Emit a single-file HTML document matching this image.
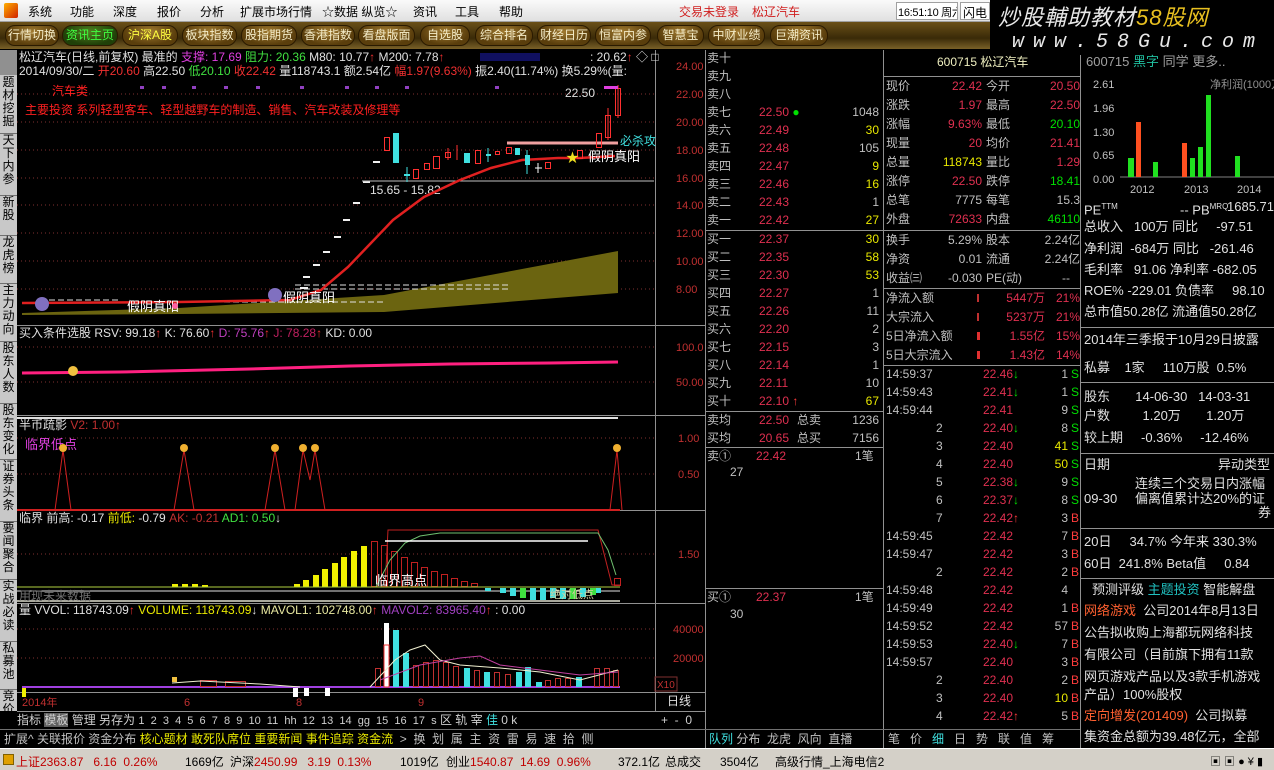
<!DOCTYPE html>
<html><head><meta charset="utf-8">
<style>
*{margin:0;padding:0;box-sizing:border-box}
body{width:1274px;height:770px;background:#000;position:relative;overflow:hidden;font-family:"Liberation Sans","Noto Sans CJK SC",sans-serif;font-size:12px;color:#c0c0c0}
.t{position:absolute;white-space:nowrap;line-height:14px}
.menu{position:absolute;left:0;top:0;width:990px;height:22px;background:linear-gradient(#fafafa,#e0e0e0);border-bottom:1px solid #a0a0a0}
.menu>span{position:absolute;top:3px;font-size:12px;color:#000;white-space:nowrap}
.tb{position:absolute;left:0;top:22px;width:990px;height:27px;background:linear-gradient(#6a5018,#3a2a08 60%,#7a6028)}
.b{position:absolute;top:3px;height:21px;border-radius:10px;background:radial-gradient(ellipse at 50% 30%,#a07a30,#5a3e0c 70%);border:1px solid #2a1a00;color:#f4ecc8;font-size:12px;text-align:center;line-height:19px}
.wm{position:absolute;left:990px;top:0;width:284px;height:55px;background:#000;font-style:italic;color:#e8e8e8}
.side{position:absolute;left:0;top:50px;width:17px;height:661px;background:#c8c8c8}
.side div{position:absolute;left:0;width:17px;font-size:12px;line-height:13px;color:#000;text-align:center;border-bottom:1px solid #707070}
.r{color:#ff3c3c}.g{color:#00e000}.y{color:#e8e800}.w{color:#e0e0e0}.c{color:#40e0e0}.m{color:#e040e0}.dr{color:#e03050}
.ob{font-size:12px}
.f{font-size:13px;color:#e0e0e0}
.bar2{position:absolute;top:730px;height:18px;font-size:12px;color:#c0c0c0;white-space:nowrap}
.status{position:absolute;left:0;top:748px;width:1274px;height:22px;background:#d4d0c8;border-top:1px solid #fff;color:#000}
.status>span{position:absolute;top:4px;font-size:12px;white-space:nowrap}
</style></head><body>

<div class="menu">
<div style="position:absolute;left:4px;top:3px;width:14px;height:15px;background:linear-gradient(135deg,#ffb000,#d02000);border-radius:2px"></div>
<span style="left:28px">系统</span><span style="left:70px">功能</span><span style="left:113px">深度</span><span style="left:157px">报价</span><span style="left:200px">分析</span><span style="left:240px">扩展市场行情</span><span style="left:322px">☆数据 纵览☆</span><span style="left:413px">资讯</span><span style="left:455px">工具</span><span style="left:499px">帮助</span>
<span style="left:679px;color:#d02020">交易未登录</span><span style="left:752px;color:#d02020">松辽汽车</span>
<span style="left:896px;top:2px;height:18px;width:62px;border:1px solid #a0a0a0;background:#fff;padding:1px 1px;font-size:11px;letter-spacing:-0.3px;overflow:hidden">16:51:10 周六</span>
<span style="left:960px;top:2px;height:18px;width:30px;border:1px solid #a0a0a0;background:#fff;padding:1px 2px">闪电</span>
</div>

<div class="tb">
<div class="b" style="left:5px;width:54px">行情切换</div>
<div class="b" style="left:62px;width:56px;color:#40ff40;background:radial-gradient(ellipse at 50% 30%,#508020,#204008 70%)">资讯主页</div>
<div class="b" style="left:122px;width:56px;color:#ffff40">沪深A股</div>
<div class="b" style="left:182px;width:55px">板块指数</div>
<div class="b" style="left:241px;width:56px">股指期货</div>
<div class="b" style="left:301px;width:54px">香港指数</div>
<div class="b" style="left:358px;width:57px">看盘版面</div>
<div class="b" style="left:420px;width:50px">自选股</div>
<div class="b" style="left:475px;width:58px">综合排名</div>
<div class="b" style="left:537px;width:54px">财经日历</div>
<div class="b" style="left:595px;width:56px">恒富内参</div>
<div class="b" style="left:657px;width:47px">智慧宝</div>
<div class="b" style="left:708px;width:57px">中财业绩</div>
<div class="b" style="left:770px;width:58px">巨潮资讯</div>
</div>

<div class="wm">
<div class="t" style="left:8px;top:6px;font-size:22px;line-height:24px;letter-spacing:1px">炒股輔助教材<span style="color:#e8c020">58股网</span></div>
<div class="t" style="left:22px;top:32px;font-size:20px;line-height:22px;letter-spacing:9px;font-family:'Liberation Mono',monospace">www.58Gu.com</div>
</div>

<div class="side">
<div style="top:26px;height:58px">题<br>材<br>挖<br>掘</div>
<div style="top:84px;height:62px">天<br>下<br>内<br>参</div>
<div style="top:146px;height:40px">新<br>股</div>
<div style="top:186px;height:48px">龙<br>虎<br>榜</div>
<div style="top:234px;height:58px">主<br>力<br>动<br>向</div>
<div style="top:292px;height:62px">股<br>东<br>人<br>数</div>
<div style="top:354px;height:56px">股<br>东<br>变<br>化</div>
<div style="top:410px;height:62px">证<br>券<br>头<br>条</div>
<div style="top:472px;height:58px">要<br>闻<br>聚<br>合</div>
<div style="top:530px;height:62px">实<br>战<br>必<br>读</div>
<div style="top:592px;height:48px">私<br>募<br>池</div>
<div style="top:640px;height:40px;border:none">竞<br>价</div>
</div>
<div style="position:absolute;left:0;top:50px;width:17px;height:25px;background:#909090"></div>

<svg width="1274" height="770" style="position:absolute;left:0;top:0" font-family="Liberation Sans,Noto Sans CJK SC,sans-serif" font-size="12">
<g stroke="#909090" stroke-width="1" fill="none">
<line x1="655.5" y1="50" x2="655.5" y2="711"/>
<line x1="705.5" y1="50" x2="705.5" y2="748"/>
<line x1="883.5" y1="50" x2="883.5" y2="748"/>
<line x1="1080.5" y1="55" x2="1080.5" y2="748"/>
<line x1="17" y1="325.5" x2="705" y2="325.5"/>
<line x1="17" y1="415.5" x2="705" y2="415.5"/>
<line x1="17" y1="510.5" x2="705" y2="510.5"/>
<line x1="17" y1="603.5" x2="705" y2="603.5"/>
<line x1="17" y1="692.5" x2="705" y2="692.5"/>
<line x1="17" y1="711.5" x2="705" y2="711.5"/>
<line x1="705" y1="230.5" x2="883" y2="230.5"/>
<line x1="705" y1="411.5" x2="883" y2="411.5"/>
<line x1="705" y1="447.5" x2="883" y2="447.5"/>
<line x1="705" y1="588.5" x2="883" y2="588.5"/>
<line x1="883" y1="76.5" x2="1080" y2="76.5"/>
<line x1="883" y1="230.5" x2="1080" y2="230.5"/>
<line x1="883" y1="288.5" x2="1080" y2="288.5"/>
<line x1="883" y1="365.5" x2="1080" y2="365.5"/>
<line x1="1080" y1="327.5" x2="1274" y2="327.5"/>
<line x1="1080" y1="382.5" x2="1274" y2="382.5"/>
<line x1="1080" y1="453.5" x2="1274" y2="453.5"/>
<line x1="1080" y1="528.5" x2="1274" y2="528.5"/>
<line x1="1080" y1="578.5" x2="1274" y2="578.5"/>
</g>
<g stroke="#803030" stroke-dasharray="1,3">
<line x1="17" y1="94" x2="655" y2="94"/><line x1="17" y1="122" x2="655" y2="122"/><line x1="17" y1="150" x2="655" y2="150"/><line x1="17" y1="178" x2="655" y2="178"/><line x1="17" y1="205" x2="655" y2="205"/><line x1="17" y1="233" x2="655" y2="233"/><line x1="17" y1="261" x2="655" y2="261"/><line x1="17" y1="289" x2="655" y2="289"/>
<line x1="17" y1="347" x2="655" y2="347"/><line x1="17" y1="382" x2="655" y2="382"/>
<line x1="17" y1="438" x2="655" y2="438"/><line x1="17" y1="474" x2="655" y2="474"/>
<line x1="17" y1="554" x2="655" y2="554"/>
<line x1="17" y1="629" x2="655" y2="629"/><line x1="17" y1="658" x2="655" y2="658"/>
</g>
<g fill="#c03030" font-size="11">
<text x="676" y="70">24.00</text><text x="676" y="98">22.00</text><text x="676" y="126">20.00</text><text x="676" y="154">18.00</text><text x="676" y="182">16.00</text><text x="676" y="209">14.00</text><text x="676" y="237">12.00</text><text x="676" y="265">10.00</text><text x="676" y="293">8.00</text>
<text x="676" y="351">100.0</text><text x="676" y="386">50.00</text>
<text x="678" y="442">1.00</text><text x="678" y="478">0.50</text>
<text x="678" y="558">1.50</text>
<text x="673" y="633">40000</text><text x="673" y="662">20000</text>
<text x="22" y="706">2014年</text><text x="184" y="706">6</text><text x="296" y="706">8</text><text x="418" y="706">9</text>
</g>
<text x="667" y="705" fill="#e0e0e0">日线</text>
<rect x="655" y="677" width="22" height="14" fill="none" stroke="#803030"/><text x="657" y="688" fill="#c03030" font-size="10">X10</text>

<rect x="17" y="50" width="638" height="14" fill="#000"/>
<text x="19" y="61" fill="#e0e0e0">松辽汽车(日线,前复权) 最准的 <tspan fill="#e040e0">支撑: 17.69</tspan> <tspan fill="#40e040">阻力: 20.36</tspan> M80: 10.77<tspan fill="#f03030">↑</tspan> M200: 7.78<tspan fill="#f03030">↑</tspan></text>
<rect x="480" y="53" width="60" height="8" fill="#101060"/>
<text x="590" y="61" fill="#e0e0e0">: 20.62<tspan fill="#f03030">↑</tspan> ◇ □</text>
<text x="19" y="75" fill="#e0e0e0">2014/09/30/二 <tspan fill="#f03030">开20.60</tspan> 高22.50 <tspan fill="#40e040">低20.10</tspan> <tspan fill="#f03030">收22.42</tspan> 量118743.1 额2.54亿 <tspan fill="#f03030">幅1.97(9.63%)</tspan> 振2.40(11.74%) 换5.29%(量:</text>
<text x="52" y="95" fill="#ff2020">汽车类</text>
<g fill="#9040c0"><rect x="140" y="86" width="4" height="3"/><rect x="162" y="86" width="4" height="3"/><rect x="192" y="86" width="4" height="3"/><rect x="224" y="86" width="4" height="3"/><rect x="256" y="86" width="4" height="3"/><rect x="300" y="86" width="4" height="3"/><rect x="345" y="86" width="4" height="3"/><rect x="375" y="86" width="4" height="3"/><rect x="405" y="86" width="4" height="3"/><rect x="495" y="86" width="4" height="3"/></g>
<text x="25" y="114" fill="#ff2020">主要投资 系列轻型客车、轻型越野车的制造、销售、汽车改装及修理等</text>
<text x="565" y="97" fill="#e0e0e0">22.50</text>

<polygon points="22,313 179,308 384,295 618,251 618,293 384,312 179,314 22,315" fill="#6b6410"/>
<g stroke="#e0e0e0" stroke-dasharray="6,3"><line x1="295" y1="285" x2="509" y2="285"/><line x1="295" y1="289" x2="509" y2="289"/><line x1="134" y1="302" x2="384" y2="302"/><line x1="40" y1="300" x2="120" y2="300"/></g>
<g stroke="#f0f0f0" stroke-width="2"><line x1="300" y1="288" x2="308" y2="288"/><line x1="303" y1="277" x2="310" y2="277"/><line x1="313" y1="265" x2="320" y2="265"/><line x1="323" y1="252" x2="330" y2="252"/><line x1="334" y1="237" x2="341" y2="237"/><line x1="343" y1="220" x2="350" y2="220"/><line x1="353" y1="203" x2="360" y2="203"/><line x1="363" y1="182" x2="370" y2="182"/><line x1="373" y1="162" x2="380" y2="162"/></g>
<line x1="362" y1="181" x2="654" y2="181" stroke="#c0c0c0"/>
<text x="370" y="194" fill="#e0e0e0">15.65 - 15.82</text>
<polyline points="22,303 179,302 290,300 321,290 348,267 371,243 393,220 424,197 460,180 491,168 522,160 558,158 580,158 615,156" fill="none" stroke="#e02020" stroke-width="2.5"/>
<line x1="507" y1="143" x2="618" y2="143" stroke="#f0a0a0" stroke-width="3"/>
<text x="620" y="145" fill="#40e0e0">必杀攻</text>
<g stroke="#ff3030" fill="none">
<rect x="384.5" y="137.5" width="5" height="13"/><rect x="413.5" y="169.5" width="5" height="9"/><rect x="424.5" y="163.5" width="5" height="6"/><rect x="433.5" y="156.5" width="6" height="12"/>
<line x1="448" y1="148" x2="448" y2="160"/><rect x="445.5" y="152.5" width="5" height="5"/><line x1="457" y1="145" x2="457" y2="160"/>
<rect x="475.5" y="150.5" width="5" height="13"/><rect x="495.5" y="151.5" width="4" height="3"/><rect x="506.5" y="147.5" width="5" height="6"/>
<rect x="545.5" y="162.5" width="5" height="6"/><rect x="577.5" y="150.5" width="5" height="8"/><rect x="596.5" y="133.5" width="5" height="14"/><rect x="605.5" y="115.5" width="5" height="22"/><rect x="615.5" y="88.5" width="5" height="27"/>
<line x1="608" y1="108" x2="608" y2="140"/><line x1="618" y1="85" x2="618" y2="118"/>
</g>
<g fill="#40e0e0"><rect x="393" y="133" width="6" height="30"/><rect x="464" y="153" width="6" height="10"/><rect x="515" y="148" width="5" height="7"/><rect x="525" y="155" width="5" height="10"/><rect x="404" y="174" width="6" height="2"/><rect x="486" y="154" width="5" height="2"/></g>
<g stroke="#40e0e0"><line x1="407" y1="167" x2="407" y2="182"/><line x1="488" y1="148" x2="488" y2="162"/><line x1="527" y1="150" x2="527" y2="174"/></g>
<g stroke="#fff"><line x1="535" y1="168" x2="542" y2="168"/><line x1="538" y1="163" x2="538" y2="173"/></g>
<text x="566" y="162" fill="#f0e020" font-size="13">★</text>
<rect x="604" y="86" width="14" height="3" fill="#e040e0"/>
<text x="588" y="161" fill="#fff" font-size="13">假阴真阳</text>
<text x="127" y="311" fill="#fff" font-size="13">假阴真阳</text>
<text x="283" y="302" fill="#fff" font-size="13">假阴真阳</text>
<circle cx="42" cy="304" r="7" fill="#8070c0"/><circle cx="275" cy="295" r="7" fill="#8070c0"/>
<circle cx="175" cy="306" r="3" fill="#ff60a0"/>

<text x="19" y="337" fill="#e0e0e0">买入条件选股 RSV: 99.18<tspan fill="#f03030">↑</tspan> K: 76.60<tspan fill="#f03030">↑</tspan> <tspan fill="#c040c0">D: 75.76</tspan><tspan fill="#f03030">↑</tspan> <tspan fill="#c02060">J: 78.28</tspan><tspan fill="#f03030">↑</tspan> KD: 0.00</text>
<polyline points="22,373 120,372 250,369 350,366 450,364 550,363 618,362" fill="none" stroke="#ff2080" stroke-width="3"/>
<circle cx="73" cy="371" r="5" fill="#f0c040"/>
<line x1="17" y1="418" x2="618" y2="418" stroke="#e0e0e0" stroke-width="2"/>

<text x="19" y="429" fill="#e0e0e0">半币疏影 <tspan fill="#c03030">  V2: 1.00</tspan><tspan fill="#f03030">↑</tspan></text>
<text x="25" y="449" fill="#e040e0" font-size="13">临界低点</text>
<g fill="none" stroke="#d02020"><polyline points="20,510 55,510 63,450 71,510 174,510 184,450 194,510 265,510 275,450 285,510 295,510 303,450 310,480 315,450 325,510 610,510 617,450 622,510"/></g>
<g fill="#f0b030"><circle cx="63" cy="448" r="4"/><circle cx="184" cy="448" r="4"/><circle cx="275" cy="448" r="4"/><circle cx="303" cy="448" r="4"/><circle cx="315" cy="448" r="4"/><circle cx="617" cy="448" r="4"/></g>
<line x1="17" y1="510" x2="620" y2="510" stroke="#d02020" stroke-width="2"/>

<text x="19" y="522" fill="#e0e0e0">临界  前高: -0.17 <tspan fill="#e8e800">前低: </tspan>-0.79 <tspan fill="#c03030">  AK: -0.21</tspan> <tspan fill="#40e040">AD1: 0.50</tspan><tspan fill="#e0e0e0">↓</tspan></text>
<g fill="#f0f000"><rect x="294" y="584" width="6" height="3"/><rect x="303" y="580" width="6" height="7"/><rect x="313" y="575" width="6" height="12"/><rect x="322" y="569" width="6" height="18"/><rect x="332" y="563" width="6" height="24"/><rect x="341" y="557" width="6" height="30"/><rect x="351" y="551" width="6" height="36"/><rect x="361" y="546" width="6" height="41"/><rect x="172" y="584" width="6" height="3"/><rect x="182" y="584" width="6" height="3"/><rect x="192" y="584" width="6" height="3"/><rect x="202" y="585" width="6" height="2"/></g>
<g fill="none" stroke="#c02020"><rect x="371.5" y="541.5" width="6" height="45"/><rect x="381.5" y="545.5" width="6" height="41"/><rect x="391.5" y="551.5" width="6" height="35"/><rect x="401.5" y="557.5" width="6" height="29"/><rect x="411.5" y="562.5" width="6" height="24"/><rect x="421.5" y="567.5" width="6" height="19"/><rect x="431.5" y="571.5" width="6" height="15"/><rect x="441.5" y="574.5" width="6" height="12"/><rect x="451.5" y="578.5" width="6" height="8"/><rect x="461.5" y="581.5" width="6" height="5"/><rect x="471.5" y="583.5" width="6" height="3"/>
<polyline points="385,587 388,530 598,530 612,585 620,585"/><rect x="614.5" y="578.5" width="6" height="7"/></g>
<polyline points="376,587 390,560 405,543 420,536 440,533 598,533 608,550 616,575" fill="none" stroke="#70c070"/>
<line x1="385" y1="541" x2="588" y2="541" stroke="#fff" stroke-width="1.5"/>
<line x1="17" y1="587" x2="620" y2="587" stroke="#b0d040"/>
<line x1="17" y1="591" x2="620" y2="591" stroke="#e0e0e0"/>
<line x1="17" y1="601" x2="620" y2="601" stroke="#e0e0d0" stroke-width="1.5"/>
<g fill="#40e0e0"><rect x="485" y="588" width="6" height="3"/><rect x="500" y="588" width="6" height="5"/><rect x="510" y="588" width="6" height="8"/><rect x="530" y="588" width="6" height="12"/><rect x="540" y="588" width="6" height="12"/><rect x="550" y="588" width="6" height="10"/><rect x="560" y="588" width="6" height="11"/><rect x="580" y="588" width="6" height="9"/><rect x="595" y="588" width="6" height="5"/></g>
<g fill="#40e040"><rect x="520" y="588" width="6" height="10"/><rect x="570" y="588" width="6" height="11"/><rect x="590" y="588" width="6" height="7"/></g>
<text x="375" y="585" fill="#fff" font-size="13">临界高点</text>
<text x="19" y="600" fill="#707070">用现未来数据</text>
<text x="550" y="598" fill="#d0d0a0" font-size="11">绝对低点</text>

<text x="19" y="614" fill="#e0e0e0">量 VVOL: 118743.09<tspan fill="#f03030">↑</tspan>  <tspan fill="#e8e800">VOLUME: 118743.09</tspan>↓ <tspan fill="#e8e8a0">MAVOL1: 102748.00</tspan><tspan fill="#f03030">↑</tspan> <tspan fill="#a040c0">MAVOL2: 83965.40</tspan><tspan fill="#f03030">↑</tspan>     : 0.00</text>
<line x1="22" y1="687" x2="620" y2="687" stroke="#a040e0" stroke-width="2"/>
<rect x="384" y="623" width="5" height="64" fill="#fff"/><rect x="384" y="645" width="5" height="42" fill="none" stroke="#f03030"/>
<g fill="#40e0e0"><rect x="393" y="630" width="6" height="57"/><rect x="403" y="653" width="6" height="34"/><rect x="464" y="668" width="6" height="19"/><rect x="484" y="672" width="6" height="15"/><rect x="516" y="672" width="6" height="15"/><rect x="525" y="667" width="6" height="20"/><rect x="536" y="682" width="6" height="5"/><rect x="576" y="677" width="6" height="10"/></g>
<g fill="none" stroke="#c03030"><rect x="413.5" y="665.5" width="5" height="21"/><rect x="423.5" y="662.5" width="5" height="24"/><rect x="433.5" y="660.5" width="5" height="26"/><rect x="443.5" y="662.5" width="5" height="24"/><rect x="453.5" y="666.5" width="5" height="20"/><rect x="474.5" y="670.5" width="5" height="16"/><rect x="494.5" y="672.5" width="5" height="14"/><rect x="505.5" y="674.5" width="5" height="12"/><rect x="545.5" y="680.5" width="5" height="6"/><rect x="555.5" y="678.5" width="5" height="8"/><rect x="565.5" y="678.5" width="5" height="8"/><rect x="594.5" y="668.5" width="5" height="18"/><rect x="604.5" y="668.5" width="5" height="18"/><rect x="613.5" y="670.5" width="5" height="16"/><rect x="375.5" y="668.5" width="5" height="18"/><rect x="200.5" y="680.5" width="16" height="6"/><rect x="225.5" y="681.5" width="20" height="5"/></g>
<rect x="172" y="677" width="5" height="5" fill="#f0c040"/>
<polyline points="370,687 395,660 410,650 425,645 440,660 460,665 500,668 540,672 580,680 618,670" fill="none" stroke="#f0f0d0"/>
<polyline points="380,680 420,665 460,658 480,656 500,665 540,670 580,675 618,672" fill="none" stroke="#c040a0"/>
<polyline points="172,683 200,681 260,684 300,687" fill="none" stroke="#f0f0d0"/>
<g fill="#fff"><rect x="293" y="688" width="5" height="9"/><rect x="304" y="688" width="5" height="8"/><rect x="325" y="688" width="5" height="8"/></g>
<rect x="22" y="688" width="4" height="9" fill="#f0f000"/>

<g fill="#c0c0c0" font-size="11"><text x="1093" y="88">2.61</text><text x="1093" y="112">1.96</text><text x="1093" y="136">1.30</text><text x="1093" y="159">0.65</text><text x="1093" y="183">0.00</text><text x="1130" y="193">2012</text><text x="1184" y="193">2013</text><text x="1237" y="193">2014</text><text x="1210" y="88" fill="#909090">净利润(1000万)</text></g>
<line x1="1120" y1="177" x2="1274" y2="177" stroke="#808080"/>
<g fill="#20e020"><rect x="1128" y="158" width="6" height="19"/><rect x="1153" y="162" width="5" height="15"/><rect x="1190" y="158" width="5" height="19"/><rect x="1198" y="147" width="5" height="30"/><rect x="1206" y="95" width="5" height="82"/><rect x="1235" y="156" width="5" height="21"/></g>
<g fill="#ff5020"><rect x="1136" y="122" width="5" height="55"/><rect x="1182" y="143" width="5" height="34"/></g>
</svg>

<div class="ob">
<div class="t" style="left:707px;top:51px">卖十</div><div class="t" style="left:707px;top:69px">卖九</div><div class="t" style="left:707px;top:87px">卖八</div>
<div class="t" style="left:707px;top:105px">卖七</div><div class="t dr" style="left:759px;top:105px">22.50 <span class="g">●</span></div><div class="t" style="left:850px;top:105px;width:29px;text-align:right">1048</div>
<div class="t" style="left:707px;top:123px">卖六</div><div class="t dr" style="left:759px;top:123px">22.49</div><div class="t y" style="left:850px;top:123px;width:29px;text-align:right">30</div>
<div class="t" style="left:707px;top:141px">卖五</div><div class="t dr" style="left:759px;top:141px">22.48</div><div class="t" style="left:850px;top:141px;width:29px;text-align:right">105</div>
<div class="t" style="left:707px;top:159px">卖四</div><div class="t dr" style="left:759px;top:159px">22.47</div><div class="t y" style="left:850px;top:159px;width:29px;text-align:right">9</div>
<div class="t" style="left:707px;top:177px">卖三</div><div class="t dr" style="left:759px;top:177px">22.46</div><div class="t y" style="left:850px;top:177px;width:29px;text-align:right">16</div>
<div class="t" style="left:707px;top:195px">卖二</div><div class="t dr" style="left:759px;top:195px">22.43</div><div class="t" style="left:850px;top:195px;width:29px;text-align:right">1</div>
<div class="t" style="left:707px;top:213px">卖一</div><div class="t dr" style="left:759px;top:213px">22.42</div><div class="t y" style="left:850px;top:213px;width:29px;text-align:right">27</div>
<div class="t" style="left:707px;top:232px">买一</div><div class="t dr" style="left:759px;top:232px">22.37</div><div class="t y" style="left:850px;top:232px;width:29px;text-align:right">30</div>
<div class="t" style="left:707px;top:250px">买二</div><div class="t dr" style="left:759px;top:250px">22.35</div><div class="t y" style="left:850px;top:250px;width:29px;text-align:right">58</div>
<div class="t" style="left:707px;top:268px">买三</div><div class="t dr" style="left:759px;top:268px">22.30</div><div class="t y" style="left:850px;top:268px;width:29px;text-align:right">53</div>
<div class="t" style="left:707px;top:286px">买四</div><div class="t dr" style="left:759px;top:286px">22.27</div><div class="t" style="left:850px;top:286px;width:29px;text-align:right">1</div>
<div class="t" style="left:707px;top:304px">买五</div><div class="t dr" style="left:759px;top:304px">22.26</div><div class="t" style="left:850px;top:304px;width:29px;text-align:right">11</div>
<div class="t" style="left:707px;top:322px">买六</div><div class="t dr" style="left:759px;top:322px">22.20</div><div class="t" style="left:850px;top:322px;width:29px;text-align:right">2</div>
<div class="t" style="left:707px;top:340px">买七</div><div class="t dr" style="left:759px;top:340px">22.15</div><div class="t" style="left:850px;top:340px;width:29px;text-align:right">3</div>
<div class="t" style="left:707px;top:358px">买八</div><div class="t dr" style="left:759px;top:358px">22.14</div><div class="t" style="left:850px;top:358px;width:29px;text-align:right">1</div>
<div class="t" style="left:707px;top:376px">买九</div><div class="t dr" style="left:759px;top:376px">22.11</div><div class="t" style="left:850px;top:376px;width:29px;text-align:right">10</div>
<div class="t" style="left:707px;top:394px">买十</div><div class="t dr" style="left:759px;top:394px">22.10 <span class="r">↑</span></div><div class="t y" style="left:850px;top:394px;width:29px;text-align:right">67</div>
<div class="t" style="left:707px;top:413px">卖均</div><div class="t dr" style="left:759px;top:413px">22.50</div><div class="t" style="left:797px;top:413px">总卖</div><div class="t" style="left:840px;top:413px;width:39px;text-align:right">1236</div>
<div class="t" style="left:707px;top:431px">买均</div><div class="t dr" style="left:759px;top:431px">20.65</div><div class="t" style="left:797px;top:431px">总买</div><div class="t" style="left:840px;top:431px;width:39px;text-align:right">7156</div>
<div class="t" style="left:707px;top:449px">卖①</div><div class="t dr" style="left:756px;top:449px">22.42</div><div class="t" style="left:855px;top:449px">1笔</div>
<div class="t" style="left:730px;top:465px">27</div>
<div class="t" style="left:707px;top:590px">买①</div><div class="t dr" style="left:756px;top:590px">22.37</div><div class="t" style="left:855px;top:590px">1笔</div>
<div class="t" style="left:730px;top:607px">30</div>
</div>

<div class="t" style="left:937px;top:55px;color:#f0f0c0;font-size:12px">600715 松辽汽车</div>
<div class="ob">
<div class="t" style="left:886px;top:79px">现价</div><div class="t dr" style="left:930px;top:79px;width:52px;text-align:right">22.42</div><div class="t" style="left:986px;top:79px">今开</div><div class="t dr" style="left:1030px;top:79px;width:50px;text-align:right">20.50</div>
<div class="t" style="left:886px;top:98px">涨跌</div><div class="t dr" style="left:930px;top:98px;width:52px;text-align:right">1.97</div><div class="t" style="left:986px;top:98px">最高</div><div class="t dr" style="left:1030px;top:98px;width:50px;text-align:right">22.50</div>
<div class="t" style="left:886px;top:117px">涨幅</div><div class="t dr" style="left:930px;top:117px;width:52px;text-align:right">9.63%</div><div class="t" style="left:986px;top:117px">最低</div><div class="t g" style="left:1030px;top:117px;width:50px;text-align:right">20.10</div>
<div class="t" style="left:886px;top:136px">现量</div><div class="t dr" style="left:930px;top:136px;width:52px;text-align:right">20</div><div class="t" style="left:986px;top:136px">均价</div><div class="t dr" style="left:1030px;top:136px;width:50px;text-align:right">21.41</div>
<div class="t" style="left:886px;top:155px">总量</div><div class="t y" style="left:930px;top:155px;width:52px;text-align:right">118743</div><div class="t" style="left:986px;top:155px">量比</div><div class="t dr" style="left:1030px;top:155px;width:50px;text-align:right">1.29</div>
<div class="t" style="left:886px;top:174px">涨停</div><div class="t dr" style="left:930px;top:174px;width:52px;text-align:right">22.50</div><div class="t" style="left:986px;top:174px">跌停</div><div class="t g" style="left:1030px;top:174px;width:50px;text-align:right">18.41</div>
<div class="t" style="left:886px;top:193px">总笔</div><div class="t" style="left:930px;top:193px;width:52px;text-align:right">7775</div><div class="t" style="left:986px;top:193px">每笔</div><div class="t" style="left:1030px;top:193px;width:50px;text-align:right">15.3</div>
<div class="t" style="left:886px;top:212px">外盘</div><div class="t dr" style="left:930px;top:212px;width:52px;text-align:right">72633</div><div class="t" style="left:986px;top:212px">内盘</div><div class="t g" style="left:1030px;top:212px;width:50px;text-align:right">46110</div>
<div class="t" style="left:886px;top:233px">换手</div><div class="t" style="left:930px;top:233px;width:52px;text-align:right">5.29%</div><div class="t" style="left:986px;top:233px">股本</div><div class="t" style="left:1030px;top:233px;width:50px;text-align:right">2.24亿</div>
<div class="t" style="left:886px;top:252px">净资</div><div class="t" style="left:930px;top:252px;width:52px;text-align:right">0.01</div><div class="t" style="left:986px;top:252px">流通</div><div class="t" style="left:1030px;top:252px;width:50px;text-align:right">2.24亿</div>
<div class="t" style="left:886px;top:271px">收益㈢</div><div class="t" style="left:925px;top:271px;width:57px;text-align:right">-0.030</div><div class="t" style="left:986px;top:271px">PE(动)</div><div class="t" style="left:1030px;top:271px;width:40px;text-align:right">--</div>
<div class="t" style="left:886px;top:291px">净流入额</div><div class="t dr" style="left:1000px;top:291px;width:45px;text-align:right">5447万</div><div class="t dr" style="left:1050px;top:291px;width:30px;text-align:right">21%</div>
<div class="t" style="left:886px;top:310px">大宗流入</div><div class="t dr" style="left:1000px;top:310px;width:45px;text-align:right">5237万</div><div class="t dr" style="left:1050px;top:310px;width:30px;text-align:right">21%</div>
<div class="t" style="left:886px;top:329px">5日净流入额</div><div class="t dr" style="left:1000px;top:329px;width:45px;text-align:right">1.55亿</div><div class="t dr" style="left:1050px;top:329px;width:30px;text-align:right">15%</div>
<div class="t" style="left:886px;top:348px">5日大宗流入</div><div class="t dr" style="left:1000px;top:348px;width:45px;text-align:right">1.43亿</div><div class="t dr" style="left:1050px;top:348px;width:30px;text-align:right">14%</div>
</div>
<div style="position:absolute;left:977px;top:294px;width:2px;height:8px;background:#c03030"></div><div style="position:absolute;left:977px;top:313px;width:2px;height:8px;background:#c03030"></div><div style="position:absolute;left:977px;top:332px;width:3px;height:8px;background:#e03030"></div><div style="position:absolute;left:977px;top:351px;width:3px;height:8px;background:#e03030"></div>

<div class="ob" style="position:absolute;left:0;top:0">
<div class="t" style="left:886px;top:367px">14:59:37</div><div class="t dr" style="left:983px;top:367px">22.46<span class="g">↓</span></div><div class="t" style="left:1040px;top:367px;width:28px;text-align:right">1</div><div class="t g" style="left:1071px;top:367px">S</div>
<div class="t" style="left:886px;top:385px">14:59:43</div><div class="t dr" style="left:983px;top:385px">22.41<span class="g">↓</span></div><div class="t" style="left:1040px;top:385px;width:28px;text-align:right">1</div><div class="t g" style="left:1071px;top:385px">S</div>
<div class="t" style="left:886px;top:403px">14:59:44</div><div class="t dr" style="left:983px;top:403px">22.41</div><div class="t" style="left:1040px;top:403px;width:28px;text-align:right">9</div><div class="t g" style="left:1071px;top:403px">S</div>
<div class="t" style="left:936px;top:421px">2</div><div class="t dr" style="left:983px;top:421px">22.40<span class="g">↓</span></div><div class="t" style="left:1040px;top:421px;width:28px;text-align:right">8</div><div class="t g" style="left:1071px;top:421px">S</div>
<div class="t" style="left:936px;top:439px">3</div><div class="t dr" style="left:983px;top:439px">22.40</div><div class="t y" style="left:1040px;top:439px;width:28px;text-align:right">41</div><div class="t g" style="left:1071px;top:439px">S</div>
<div class="t" style="left:936px;top:457px">4</div><div class="t dr" style="left:983px;top:457px">22.40</div><div class="t y" style="left:1040px;top:457px;width:28px;text-align:right">50</div><div class="t g" style="left:1071px;top:457px">S</div>
<div class="t" style="left:936px;top:475px">5</div><div class="t dr" style="left:983px;top:475px">22.38<span class="g">↓</span></div><div class="t" style="left:1040px;top:475px;width:28px;text-align:right">9</div><div class="t g" style="left:1071px;top:475px">S</div>
<div class="t" style="left:936px;top:493px">6</div><div class="t dr" style="left:983px;top:493px">22.37<span class="g">↓</span></div><div class="t" style="left:1040px;top:493px;width:28px;text-align:right">8</div><div class="t g" style="left:1071px;top:493px">S</div>
<div class="t" style="left:936px;top:511px">7</div><div class="t dr" style="left:983px;top:511px">22.42<span class="r">↑</span></div><div class="t" style="left:1040px;top:511px;width:28px;text-align:right">3</div><div class="t r" style="left:1071px;top:511px">B</div>
<div class="t" style="left:886px;top:529px">14:59:45</div><div class="t dr" style="left:983px;top:529px">22.42</div><div class="t" style="left:1040px;top:529px;width:28px;text-align:right">7</div><div class="t r" style="left:1071px;top:529px">B</div>
<div class="t" style="left:886px;top:547px">14:59:47</div><div class="t dr" style="left:983px;top:547px">22.42</div><div class="t" style="left:1040px;top:547px;width:28px;text-align:right">3</div><div class="t r" style="left:1071px;top:547px">B</div>
<div class="t" style="left:936px;top:565px">2</div><div class="t dr" style="left:983px;top:565px">22.42</div><div class="t" style="left:1040px;top:565px;width:28px;text-align:right">2</div><div class="t r" style="left:1071px;top:565px">B</div>
<div class="t" style="left:886px;top:583px">14:59:48</div><div class="t dr" style="left:983px;top:583px">22.42</div><div class="t" style="left:1040px;top:583px;width:28px;text-align:right">4</div>
<div class="t" style="left:886px;top:601px">14:59:49</div><div class="t dr" style="left:983px;top:601px">22.42</div><div class="t" style="left:1040px;top:601px;width:28px;text-align:right">1</div><div class="t r" style="left:1071px;top:601px">B</div>
<div class="t" style="left:886px;top:619px">14:59:52</div><div class="t dr" style="left:983px;top:619px">22.42</div><div class="t" style="left:1040px;top:619px;width:28px;text-align:right">57</div><div class="t r" style="left:1071px;top:619px">B</div>
<div class="t" style="left:886px;top:637px">14:59:53</div><div class="t dr" style="left:983px;top:637px">22.40<span class="g">↓</span></div><div class="t" style="left:1040px;top:637px;width:28px;text-align:right">7</div><div class="t r" style="left:1071px;top:637px">B</div>
<div class="t" style="left:886px;top:655px">14:59:57</div><div class="t dr" style="left:983px;top:655px">22.40</div><div class="t" style="left:1040px;top:655px;width:28px;text-align:right">3</div><div class="t r" style="left:1071px;top:655px">B</div>
<div class="t" style="left:936px;top:673px">2</div><div class="t dr" style="left:983px;top:673px">22.40</div><div class="t" style="left:1040px;top:673px;width:28px;text-align:right">2</div><div class="t r" style="left:1071px;top:673px">B</div>
<div class="t" style="left:936px;top:691px">3</div><div class="t dr" style="left:983px;top:691px">22.40</div><div class="t y" style="left:1040px;top:691px;width:28px;text-align:right">10</div><div class="t r" style="left:1071px;top:691px">B</div>
<div class="t" style="left:936px;top:709px">4</div><div class="t dr" style="left:983px;top:709px">22.42<span class="r">↑</span></div><div class="t" style="left:1040px;top:709px;width:28px;text-align:right">5</div><div class="t r" style="left:1071px;top:709px">B</div>
</div>

<div class="t" style="left:1086px;top:55px;color:#a0a0a0;font-size:13px">600715 <span style="color:#20c0a0">黑字</span> 同学 更多..</div>
<div class="f">
<div class="t" style="left:1084px;top:200px">PE<sup style="font-size:8px">TTM</sup></div><div class="t" style="left:1180px;top:200px">-- PB<sup style="font-size:8px">MRQ</sup></div><div class="t" style="left:1226px;top:200px;width:48px;text-align:right">1685.71</div>
<div class="t" style="left:1084px;top:220px">总收入 &nbsp; 100万 同比 &nbsp; &nbsp; -97.51</div>
<div class="t" style="left:1084px;top:242px">净利润 &nbsp;-684万 同比 &nbsp; -261.46</div>
<div class="t" style="left:1084px;top:263px">毛利率 &nbsp; 91.06 净利率 -682.05</div>
<div class="t" style="left:1084px;top:284px">ROE% -229.01 负债率 &nbsp; &nbsp; 98.10</div>
<div class="t" style="left:1084px;top:305px">总市值50.28亿 流通值50.28亿</div>
<div class="t" style="left:1084px;top:333px">2014年三季报于10月29日披露</div>
<div class="t" style="left:1084px;top:361px">私募 &nbsp; &nbsp;1家 &nbsp; &nbsp; 110万股 &nbsp;0.5%</div>
<div class="t" style="left:1084px;top:390px">股东 &nbsp; &nbsp; &nbsp; 14-06-30 &nbsp; 14-03-31</div>
<div class="t" style="left:1084px;top:409px">户数 &nbsp; &nbsp; &nbsp; &nbsp; 1.20万 &nbsp; &nbsp; &nbsp; 1.20万</div>
<div class="t" style="left:1084px;top:431px">较上期 &nbsp; &nbsp; -0.36% &nbsp; &nbsp; -12.46%</div>
<div class="t" style="left:1084px;top:458px">日期</div><div class="t" style="left:1218px;top:458px">异动类型</div>
<div class="t" style="left:1135px;top:477px">连续三个交易日内涨幅</div>
<div class="t" style="left:1084px;top:492px">09-30</div><div class="t" style="left:1135px;top:492px">偏离值累计达20%的证</div>
<div class="t" style="left:1258px;top:506px">券</div>
<div class="t" style="left:1084px;top:535px">20日 &nbsp; &nbsp; 34.7% 今年来 330.3%</div>
<div class="t" style="left:1084px;top:557px">60日 &nbsp;241.8% Beta值 &nbsp; &nbsp; 0.84</div>
<div class="t" style="left:1092px;top:583px">预测评级 <span style="color:#20c0c0">主题投资</span> 智能解盘</div>
<div class="t" style="left:1084px;top:604px"><span style="color:#ff6030">网络游戏</span> &nbsp;公司2014年8月13日</div>
<div class="t" style="left:1084px;top:626px">公告拟收购上海都玩网络科技</div>
<div class="t" style="left:1084px;top:648px">有限公司（目前旗下拥有11款</div>
<div class="t" style="left:1084px;top:670px">网页游戏产品以及3款手机游戏</div>
<div class="t" style="left:1084px;top:688px">产品）100%股权</div>
<div class="t" style="left:1084px;top:709px"><span style="color:#ff6030">定向增发(201409)</span> &nbsp;公司拟募</div>
<div class="t" style="left:1084px;top:730px">集资金总额为39.48亿元，全部</div>
</div>

<div class="t" style="left:17px;top:713px;font-size:12px;color:#d0d0d0">指标 <span style="background:#606060">模板</span> 管理 另存为 <span style="font-size:11px">1 &nbsp;2 &nbsp;3 &nbsp;4 &nbsp;5 &nbsp;6 &nbsp;7 &nbsp;8 &nbsp;9 &nbsp;10 &nbsp;11 &nbsp;hh &nbsp;12 &nbsp;13 &nbsp;14 &nbsp;gg &nbsp;15 &nbsp;16 &nbsp;17 &nbsp;s</span> 区 轨 宰 <span class="c">佳</span> 0 k</div>
<div class="t" style="left:661px;top:713px;color:#d0d0d0">+ &nbsp;- &nbsp;0</div>
<div style="position:absolute;left:0;top:729px;width:1080px;height:1px;background:#707070"></div>
<div class="bar2" style="left:4px">扩展^ 关联报价 资金分布 <span class="y">核心题材</span> <span class="y">敢死队席位</span> <span class="y">重要新闻</span> <span class="y">事件追踪</span> <span class="y">资金流</span> &nbsp;&gt; &nbsp;换 &nbsp;划 &nbsp;属 &nbsp;主 &nbsp;资 &nbsp;雷 &nbsp;易 &nbsp;速 &nbsp;拾 &nbsp;侧</div>
<div class="bar2" style="left:709px"><span class="c">队列</span> 分布 &nbsp;龙虎 &nbsp;风向 &nbsp;直播</div>
<div class="bar2" style="left:888px">笔 &nbsp; 价 &nbsp; <span class="c">细</span> &nbsp; 日 &nbsp; 势 &nbsp; 联 &nbsp; 值 &nbsp; 筹</div>

<div class="status">
<div style="position:absolute;left:3px;top:5px;width:11px;height:11px;background:#e0a000;border:1px solid #806000"></div>
<span style="left:16px;color:#c00000">上证2363.87 &nbsp; 6.16 &nbsp;0.26%</span><span style="left:185px">1669亿</span>
<span style="left:230px">沪深<b style="font-weight:normal;color:#c00000">2450.99 &nbsp; 3.19 &nbsp;0.13%</b></span><span style="left:400px">1019亿</span>
<span style="left:446px">创业<b style="font-weight:normal;color:#c00000">1540.87 &nbsp;14.69 &nbsp;0.96%</b></span><span style="left:618px">372.1亿</span>
<span style="left:665px">总成交</span><span style="left:720px">3504亿</span><span style="left:775px">高级行情_上海电信2</span>
<span style="left:1210px;font-size:11px">▣ ▣ ● ¥ ▮</span>
</div>
</body></html>
